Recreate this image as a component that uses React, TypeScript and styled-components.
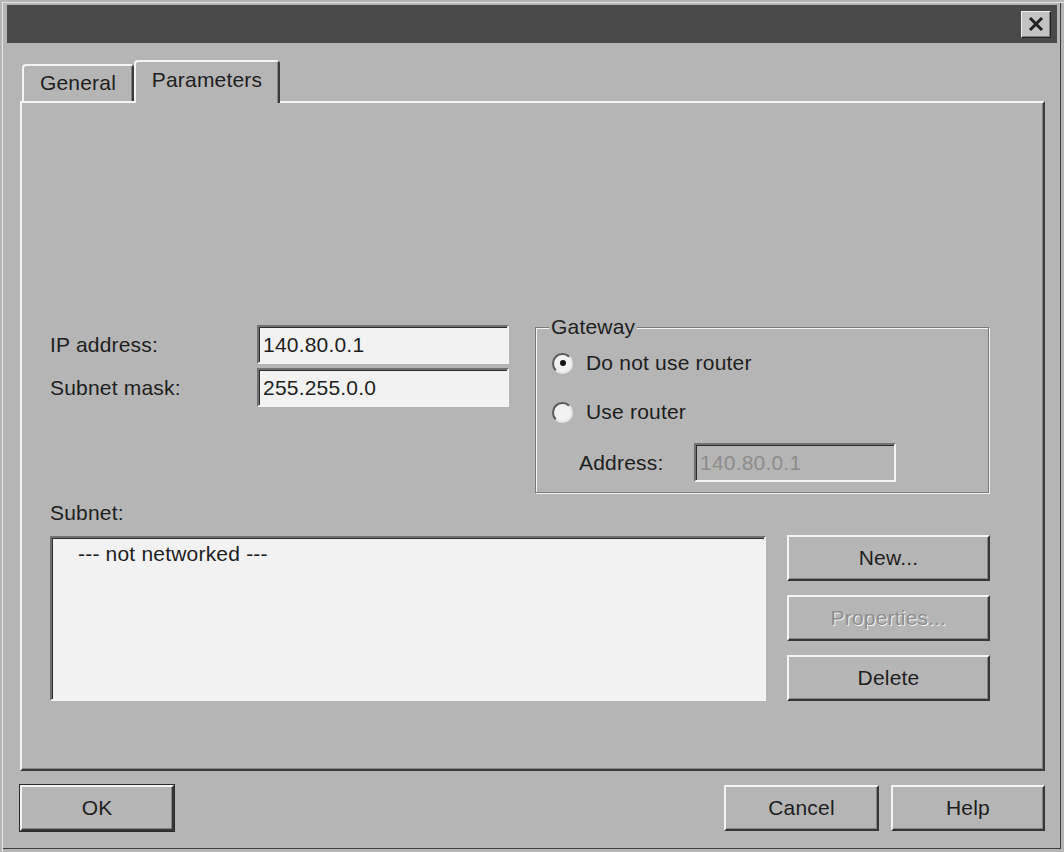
import styled, { createGlobalStyle } from "styled-components";

const GlobalStyle = createGlobalStyle`
  html, body {
    margin: 0;
    padding: 0;
    background: #b5b5b5;
  }
  * {
    box-sizing: border-box;
  }
`;

const face = "#b5b5b5";
const ink = "#1e1e1e";

export default function App() {
  return (
    <>
      <GlobalStyle />
      <Window>
        <TitleBar>
          <CloseBtn aria-label="Close">
            <svg width="16" height="14" viewBox="0 0 16 14">
              <path d="M2 1 L14 13 M14 1 L2 13" stroke="#202020" strokeWidth="3" fill="none" />
            </svg>
          </CloseBtn>
        </TitleBar>
        <Content>
          <TabStrip>
            <Tab $width={112}>General</Tab>
            <Tab $width={146} $active>
              Parameters
            </Tab>
          </TabStrip>
          <Panel>
            <TopRow>
              <Fields>
                <FieldRow>
                  <FieldLabel>IP address:</FieldLabel>
                  <TextBox $width={252}>140.80.0.1</TextBox>
                </FieldRow>
                <FieldRow>
                  <FieldLabel>Subnet mask:</FieldLabel>
                  <TextBox $width={252}>255.255.0.0</TextBox>
                </FieldRow>
              </Fields>
              <Group>
                <Legend>Gateway</Legend>
                <RadioRow $top={10}>
                  <Radio $checked />
                  <span>Do not use router</span>
                </RadioRow>
                <RadioRow $top={21}>
                  <Radio />
                  <span>Use router</span>
                </RadioRow>
                <AddressRow>
                  <AddressLabel>Address:</AddressLabel>
                  <TextBox $width={202} $disabled>
                    140.80.0.1
                  </TextBox>
                </AddressRow>
              </Group>
            </TopRow>
            <SubnetGrid>
              <SubnetLabel>Subnet:</SubnetLabel>
              <ListBox>
                <ListItem>--- not networked ---</ListItem>
              </ListBox>
              <SideButtons>
                <Button>New...</Button>
                <Button $disabled>Properties...</Button>
                <Button>Delete</Button>
              </SideButtons>
            </SubnetGrid>
          </Panel>
          <Footer>
            <Button $width={154} $default>
              OK
            </Button>
            <Spacer />
            <Button $width={155}>Cancel</Button>
            <Button $width={154}>Help</Button>
          </Footer>
        </Content>
      </Window>
    </>
  );
}

const Window = styled.div`
  width: 1064px;
  height: 852px;
  background: ${face};
  padding: 5px 7px 0;
  font-family: "Liberation Sans", Arial, sans-serif;
  font-size: 21px;
  color: ${ink};
  box-shadow: inset 2px 2px 0 ${face}, inset 3px 3px 0 #e4e4e4,
    inset -3px -3px 0 ${face}, inset -4px -4px 0 #404040;
`;

const TitleBar = styled.div`
  height: 38px;
  background: #4a4a4a;
  display: flex;
  align-items: center;
  justify-content: flex-end;
  padding-right: 6px;
`;

const CloseBtn = styled.div`
  width: 30px;
  height: 27px;
  background: #c2c2c2;
  border: 1px solid;
  border-color: #eeeeee #202020 #202020 #eeeeee;
  box-shadow: inset -1px -1px 0 #808080;
  display: flex;
  align-items: center;
  justify-content: center;
`;

const Content = styled.div`
  padding: 17px 12px 0 13px;
`;

const TabStrip = styled.div`
  display: flex;
  align-items: flex-end;
  padding-left: 2px;
  height: 41px;
  position: relative;
  z-index: 1;
`;

const Tab = styled.div<{ $width: number; $active?: boolean }>`
  width: ${(p) => p.$width}px;
  height: ${(p) => (p.$active ? 43 : 37)}px;
  margin-bottom: ${(p) => (p.$active ? -2 : 0)}px;
  background: ${face};
  border: 2px solid;
  border-bottom: none;
  border-color: #f4f4f4 #3a3a3a transparent #f4f4f4;
  border-radius: 4px 4px 0 0;
  box-shadow: inset -1px 0 0 #858585;
  display: flex;
  justify-content: center;
  padding-top: ${(p) => (p.$active ? 6 : 5)}px;
  line-height: 24px;
  letter-spacing: 0.2px;
`;

const Panel = styled.div`
  height: 670px;
  border: 2px solid;
  border-color: #f4f4f4 #3a3a3a #3a3a3a #f4f4f4;
  box-shadow: inset -1px -1px 0 #858585;
  padding: 212px 0 0 28px;
`;

const TopRow = styled.div`
  display: flex;
  align-items: flex-start;
  gap: 26px;
`;

const Fields = styled.div`
  width: 459px;
  padding-top: 10px;
  display: flex;
  flex-direction: column;
  gap: 4px;
`;

const FieldRow = styled.div`
  display: flex;
  align-items: center;
`;

const FieldLabel = styled.div`
  width: 207px;
  letter-spacing: 0.2px;
`;

const TextBox = styled.div<{ $width: number; $disabled?: boolean }>`
  width: ${(p) => p.$width}px;
  height: 39px;
  background: ${(p) => (p.$disabled ? face : "#f2f2f2")};
  color: ${(p) => (p.$disabled ? "#8c8c8c" : ink)};
  border: 2px solid;
  border-color: #707070 #f4f4f4 #f4f4f4 #707070;
  box-shadow: inset 1px 1px 0 #2c2c2c;
  padding: 0 4px;
  display: flex;
  align-items: center;
  letter-spacing: 0.2px;
`;

const Group = styled.fieldset`
  width: 454px;
  height: 178px;
  margin: 0;
  padding: 0 16px 10px;
  border: 1px solid #7a7a7a;
  box-shadow: inset 1px 1px 0 #f4f4f4, 1px 1px 0 #f4f4f4;
  min-inline-size: 0;
`;

const Legend = styled.legend`
  padding: 0 2px;
  margin-left: -3px;
  line-height: 24px;
  background: ${face};
  letter-spacing: 0.2px;
`;

const RadioRow = styled.div<{ $top: number }>`
  display: flex;
  align-items: center;
  gap: 13px;
  height: 28px;
  margin-top: ${(p) => p.$top}px;
  letter-spacing: 0.2px;
`;

const Radio = styled.span<{ $checked?: boolean }>`
  width: 21px;
  height: 21px;
  border-radius: 50%;
  background: #f2f2f2;
  border: 2px solid;
  border-color: #5a5a5a #e6e6e6 #e6e6e6 #5a5a5a;
  display: flex;
  align-items: center;
  justify-content: center;
  &::after {
    content: "";
    width: 6px;
    height: 6px;
    border-radius: 50%;
    background: ${(p) => (p.$checked ? "#141414" : "transparent")};
  }
`;

const AddressRow = styled.div`
  display: flex;
  align-items: center;
  margin-top: 17px;
  padding-left: 27px;
`;

const AddressLabel = styled.div`
  width: 115px;
  letter-spacing: 0.2px;
`;

const SubnetGrid = styled.div`
  display: grid;
  grid-template-columns: 716px 203px;
  column-gap: 21px;
  margin-top: 8px;
`;

const SubnetLabel = styled.div`
  grid-column: 1 / 3;
  line-height: 24px;
  margin-bottom: 11px;
  letter-spacing: 0.2px;
`;

const ListBox = styled.div`
  height: 165px;
  background: #f2f2f2;
  border: 2px solid;
  border-color: #707070 #f4f4f4 #f4f4f4 #707070;
  box-shadow: inset 1px 1px 0 #2c2c2c;
  padding: 4px 0 0 26px;
`;

const ListItem = styled.div`
  line-height: 24px;
  letter-spacing: 0.2px;
`;

const SideButtons = styled.div`
  display: flex;
  flex-direction: column;
  gap: 14px;
  margin-top: -1px;
`;

const Button = styled.div<{ $width?: number; $disabled?: boolean; $default?: boolean }>`
  width: ${(p) => (p.$width ? `${p.$width}px` : "100%")};
  height: 46px;
  background: ${face};
  border: 2px solid;
  border-color: #f4f4f4 #363636 #363636 #f4f4f4;
  box-shadow: inset -1px -1px 0 #858585
    ${(p) => (p.$default ? ", 0 0 0 1px #2a2a2a" : "")};
  display: flex;
  align-items: center;
  justify-content: center;
  letter-spacing: 0.2px;
  color: ${(p) => (p.$disabled ? "#8e8e8e" : ink)};
  text-shadow: ${(p) => (p.$disabled ? "1px 1px 0 #f4f4f4" : "none")};
`;

const Footer = styled.div`
  display: flex;
  gap: 12px;
  margin-top: 14px;
`;

const Spacer = styled.div`
  flex: 1;
`;
